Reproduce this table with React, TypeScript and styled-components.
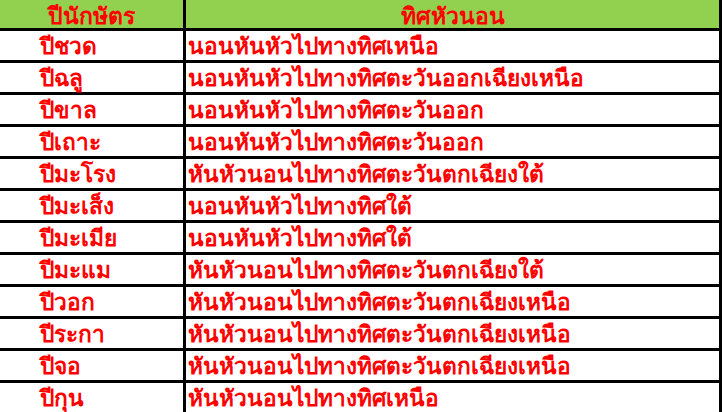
import React from "react";
import styled, { createGlobalStyle } from "styled-components";

const GlobalStyle = createGlobalStyle`
  html, body {
    margin: 0;
    padding: 0;
    background: #ffffff;
    overflow: hidden;
  }
`;

const Table = styled.div`
  display: grid;
  grid-template-columns: 183px 533px;
  grid-template-rows: 28px;
  grid-auto-rows: 29px;
  gap: 3px;
  width: 722px;
  padding-right: 3px;
  box-sizing: border-box;
  background: #000000;
  font-family: Tahoma, "Noto Sans", "DejaVu Sans", sans-serif;
  font-weight: bold;
  font-size: 22.7px;
  color: #ff0000;
`;

const Cell = styled.div<{ $header?: boolean; $indent?: number }>`
  display: flex;
  align-items: center;
  justify-content: ${(p) => (p.$header ? "center" : "flex-start")};
  padding-left: ${(p) => (p.$indent ?? 0)}px;
  padding-top: ${(p) => (p.$header ? 3 : 1)}px;
  background: ${(p) => (p.$header ? "#92d050" : "#ffffff")};
  font-size: ${(p) => (p.$header ? "23px" : "inherit")};
  white-space: nowrap;
  line-height: 1;
`;

const rows: [string, string][] = [
  ["ปีชวด", "นอนหันหัวไปทางทิศเหนือ"],
  ["ปีฉลู", "นอนหันหัวไปทางทิศตะวันออกเฉียงเหนือ"],
  ["ปีขาล", "นอนหันหัวไปทางทิศตะวันออก"],
  ["ปีเถาะ", "นอนหันหัวไปทางทิศตะวันออก"],
  ["ปีมะโรง", "หันหัวนอนไปทางทิศตะวันตกเฉียงใต้"],
  ["ปีมะเส็ง", "นอนหันหัวไปทางทิศใต้"],
  ["ปีมะเมีย", "นอนหันหัวไปทางทิศใต้"],
  ["ปีมะแม", "หันหัวนอนไปทางทิศตะวันตกเฉียงใต้"],
  ["ปีวอก", "หันหัวนอนไปทางทิศตะวันตกเฉียงเหนือ"],
  ["ปีระกา", "หันหัวนอนไปทางทิศตะวันตกเฉียงเหนือ"],
  ["ปีจอ", "หันหัวนอนไปทางทิศตะวันตกเฉียงเหนือ"],
  ["ปีกุน", "หันหัวนอนไปทางทิศเหนือ"],
];

const App = () => {
  return (
    <>
      <GlobalStyle />
      <Table>
        <Cell $header>ปีนักษัตร</Cell>
        <Cell $header>ทิศหัวนอน</Cell>
        {rows.map(([year, dir]) => (
          <React.Fragment key={year}>
            <Cell $indent={40}>{year}</Cell>
            <Cell $indent={2}>{dir}</Cell>
          </React.Fragment>
        ))}
      </Table>
    </>
  );
};

export default App;
